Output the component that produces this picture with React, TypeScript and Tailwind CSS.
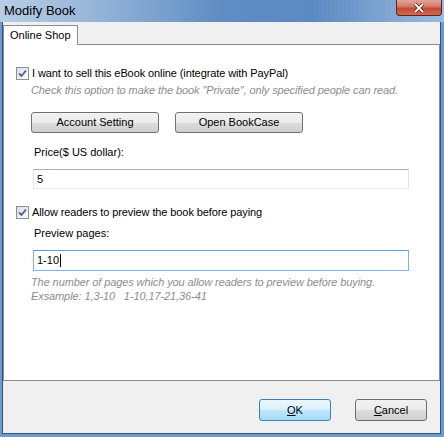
import React from "react";

function Check() {
  return (
    <span className="w-[13px] h-[13px] border border-[#8e8f8f] bg-gradient-to-br from-[#dcdcdc] to-[#ffffff] flex items-center justify-center shrink-0">
      <svg width="9" height="9" viewBox="0 0 9 9">
        <path d="M1 4.5 L3.5 7 L8 1.5" fill="none" stroke="#4a5f97" strokeWidth="1.8" />
      </svg>
    </span>
  );
}

function Btn({ label, w }: { label: React.ReactNode; w: string }) {
  return (
    <button className={`${w} h-[21px] rounded-[3px] border border-[#707070] bg-[linear-gradient(#f2f2f2_0%,#ebebeb_50%,#dddddd_51%,#cfcfcf_100%)] text-[11px] text-black flex items-center justify-center`}>
      {label}
    </button>
  );
}

export default function App() {
  return (
    <div
      className="w-[444px] h-[437px] flex flex-col bg-[#6c9bd2] pl-[2px] pr-[3px] pb-[3px] text-black"
      style={{ fontFamily: '"Liberation Sans", Arial, sans-serif' }}
    >
      {/* title bar */}
      <div className="h-[22px] -ml-[2px] -mr-[3px] flex justify-between bg-[linear-gradient(90deg,#b8cde5_0%,#8fb0d6_25%,#5f8cc3_50%,#5b89c1_70%,#9bbbe0_100%)]">
        <span className="pl-[4px] pt-[3px] text-[13px] leading-[16px]">Modify Book</span>
        <div className="mr-[2px] w-[46px] h-[16px] rounded-b-[4px] border border-t-0 border-[#5a2420] bg-[linear-gradient(#e4a89c_0%,#d47565_45%,#c04a35_55%,#d8674c_100%)] flex items-center justify-center">
          <svg width="12" height="10" viewBox="0 0 12 10">
            <path d="M2 1 L10 9 M10 1 L2 9" stroke="#4a1a14" strokeWidth="3.2" />
            <path d="M2 1 L10 9 M10 1 L2 9" stroke="#ffffff" strokeWidth="1.8" />
          </svg>
        </div>
      </div>

      {/* client */}
      <div className="flex-1 flex flex-col bg-[#f0f0f0] border-x border-b border-[#33537c]">
        <div className="pt-[3px] flex">
          <div className="relative z-10 h-[20px] -mb-[1px] px-[6px] bg-white border border-b-0 border-[#898c95] text-[11px] leading-[18px]">
            Online Shop
          </div>
        </div>
        <div className="h-[337px] bg-white border border-[#898c95] pl-[12px] flex flex-col">
          <div className="mt-[21px] h-[14px] flex items-center gap-[3px]">
            <Check />
            <span className="text-[11px] tracking-[-0.1px]">I want to sell this eBook online (integrate with PayPal)</span>
          </div>
          <div className="mt-[3px] h-[14px] pl-[15px] text-[11px] leading-[14px] italic text-[#8d8d8d] tracking-[-0.1px]">
            Check this option to make the book "Private", only specified people can read.
          </div>
          <div className="mt-[15px] pl-[15px] flex gap-[16px]">
            <Btn label="Account Setting" w="w-[128px]" />
            <Btn label="Open BookCase" w="w-[128px]" />
          </div>
          <div className="mt-[12px] h-[14px] pl-[18px] text-[11px] leading-[14px]">Price($ US dollar):</div>
          <div className="mt-[10px] ml-[17px] w-[376px] h-[20px] border border-[#abadb3] border-t-[#abadb3] border-x-[#e2e3ea] border-b-[#e3e9ef] text-[11px] leading-[18px] pl-[3px]">
            5
          </div>
          <div className="mt-[16px] h-[14px] flex items-center gap-[3px]">
            <Check />
            <span className="text-[11px] tracking-[-0.1px]">Allow readers to preview the book before paying</span>
          </div>
          <div className="mt-[7px] h-[14px] pl-[18px] text-[11px] leading-[14px]">Preview pages:</div>
          <div className="mt-[10px] ml-[17px] w-[376px] h-[21px] border border-[#7eb4ea] border-t-[#569de5] text-[11px] leading-[19px] pl-[3px] flex items-center">
            <span>1-10</span>
            <span className="w-px h-[13px] bg-black ml-[1px]" />
          </div>
          <div className="mt-[4px] pl-[15px] text-[11px] leading-[14px] italic text-[#8d8d8d] tracking-[-0.1px]">
            <div>The number of pages which you allow readers to preview before buying.</div>
            <div className="whitespace-pre">Exsample: 1,3-10   1-10,17-21,36-41</div>
          </div>
        </div>
        <div className="flex-1 flex justify-end items-start pt-[18px] pr-[13px] gap-[24px]">
          <button className="w-[72px] h-[22px] rounded-[3px] border border-[#3c7fb1] bg-[linear-gradient(#eaf6fd_0%,#d9f0fc_50%,#bee6fd_51%,#a7d9f5_100%)] text-[11px] shadow-[inset_0_0_0_1px_#48d0f8_inset]">
            <span className="underline">O</span>K
          </button>
          <button className="w-[72px] h-[22px] rounded-[3px] border border-[#707070] bg-[linear-gradient(#f2f2f2_0%,#ebebeb_50%,#dddddd_51%,#cfcfcf_100%)] text-[11px]">
            <span className="underline">C</span>ancel
          </button>
        </div>
      </div>
    </div>
  );
}
